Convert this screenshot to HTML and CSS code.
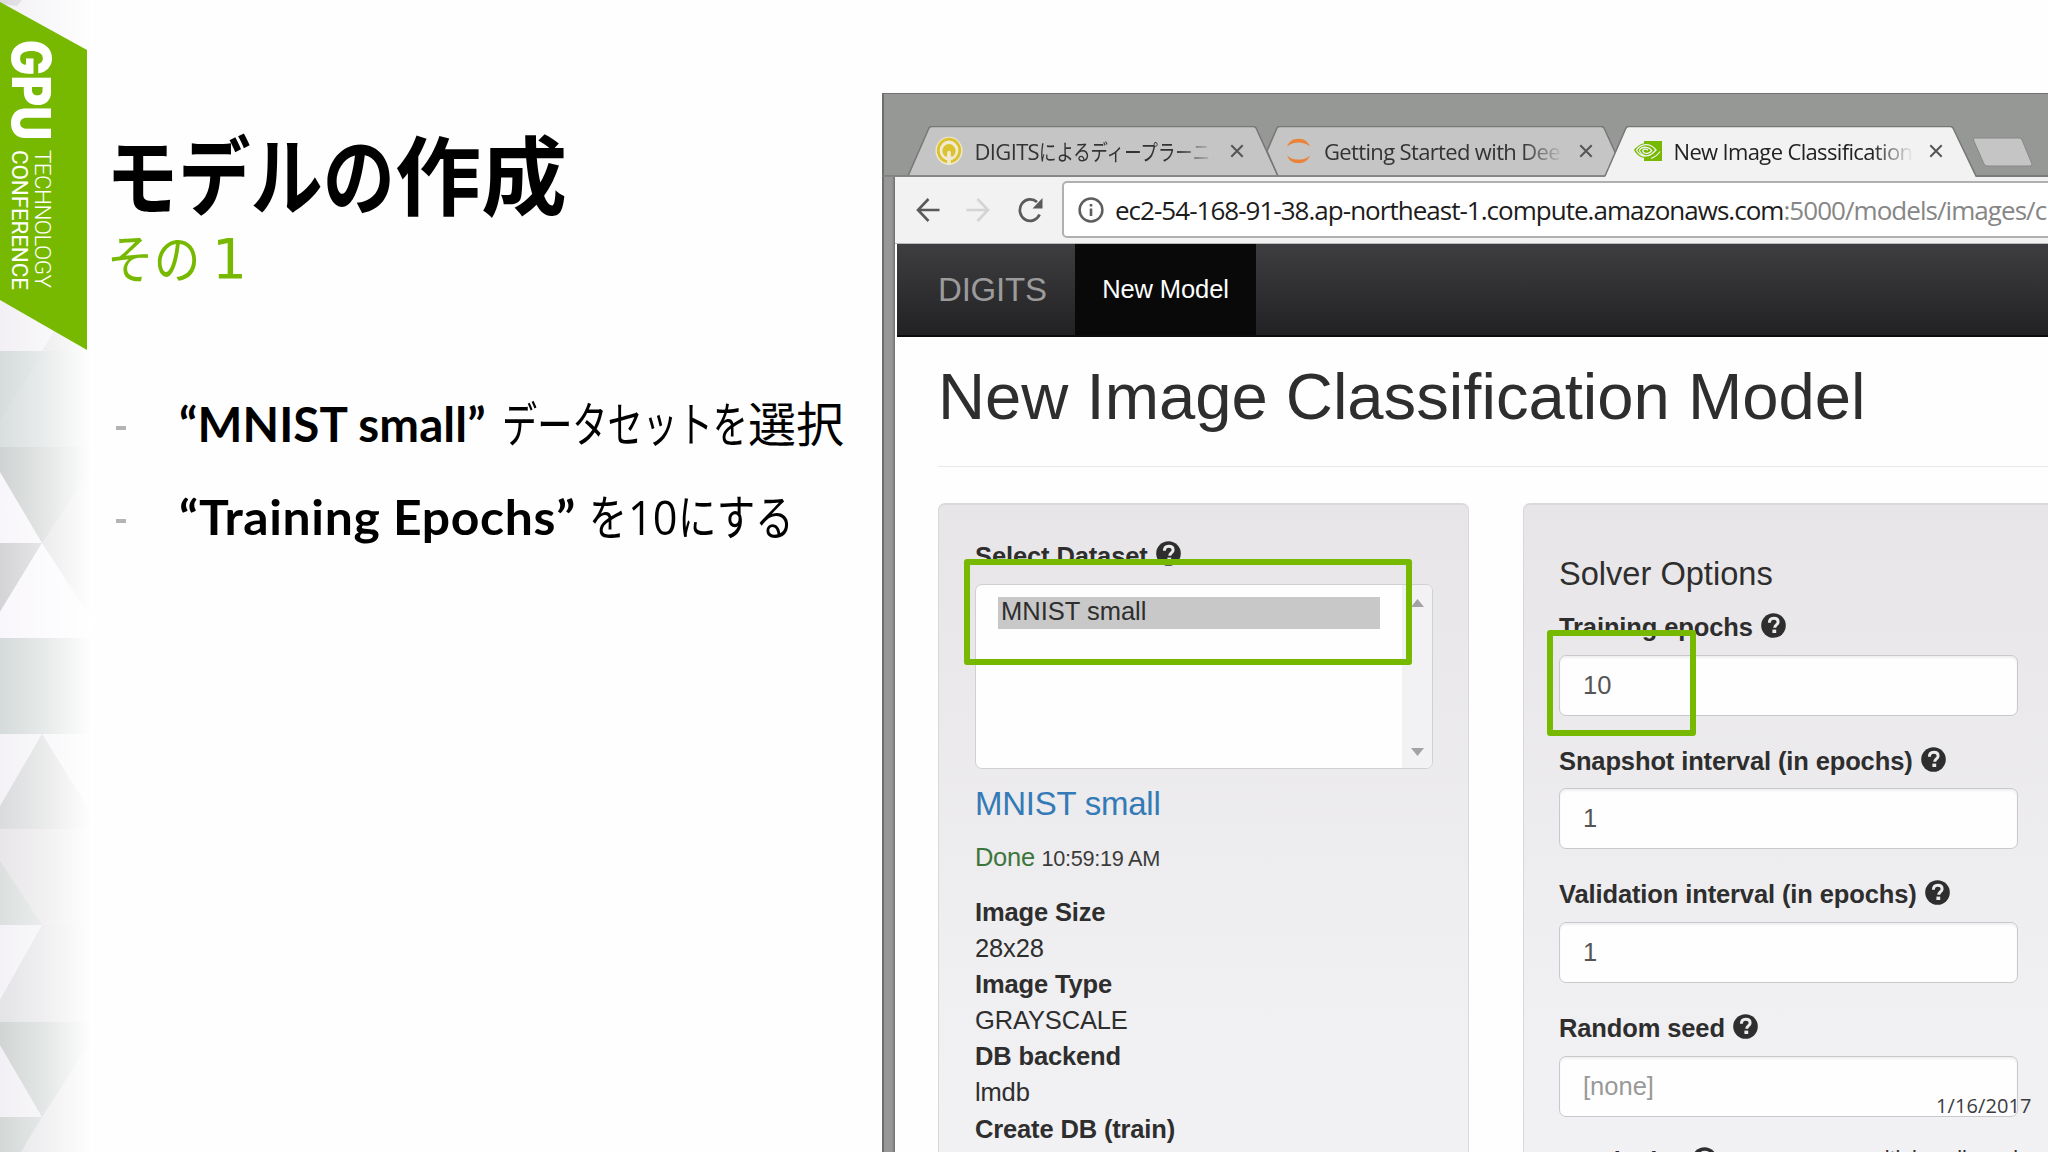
FILE: index.html
```html
<!DOCTYPE html>
<html lang="ja">
<head>
<meta charset="utf-8">
<title>モデルの作成</title>
<link rel="stylesheet" href="styles.css">
</head>
<body>
<svg class="defs" width="0" height="0" aria-hidden="true">
  <symbol id="help" viewBox="0 0 25 25">
    <circle cx="12.5" cy="12.5" r="12.3" fill="#2e2e2e"/>
    <path d="M8.4 9.8c0-3 1.8-4.5 4.3-4.5 2.6 0 4.4 1.4 4.4 3.6 0 3.1-3.4 3-3.4 5.9" fill="none" stroke="#ececec" stroke-width="3"/>
    <rect x="11.4" y="16.6" width="3.8" height="3.4" fill="#ececec"/>
  </symbol>
  <symbol id="close" viewBox="0 0 14 14">
    <path d="M1.3 1.3l11.4 11.4M12.7 1.3L1.3 12.7" stroke="#555" stroke-width="2" fill="none"/>
  </symbol>
</svg>
<main class="slide">
  <aside class="rail">
    <svg width="93" height="1152" viewBox="0 0 93 1152">
      <defs>
        <linearGradient id="fade" x1="0" x2="1" y1="0" y2="0">
          <stop offset="0" stop-color="#fff" stop-opacity="0"/>
          <stop offset=".45" stop-color="#fff" stop-opacity=".4"/>
          <stop offset="1" stop-color="#fff"/>
        </linearGradient>
      </defs>
      <rect width="93" height="1152" fill="#f2f0f4"/>
      <path d="M0 0H22L17 6 0 4z" fill="#dcdadf"/>
      <path d="M57 326L42 351H93V326z" fill="#e2e1e4"/>
      <rect y="351" width="93" height="96" fill="#d9dede"/>
      <path d="M0 351H44L0 420z" fill="#d5dcdb"/>
      <rect y="447" width="93" height="96" fill="#d0d3d3"/>
      <path d="M0 472L42 543H0z" fill="#f8f6fa"/>
      <path d="M42 543L93 465V620z" fill="#dfdee0"/>
      <path d="M0 543H42L0 612z" fill="#d4d4d6"/>
      <path d="M42 543L93 625V638H0V612z" fill="#f9f7fb"/>
      <rect y="638" width="93" height="96" fill="#d5dbda"/>
      <rect y="734" width="93" height="95" fill="#f4f2f6"/>
      <path d="M42 734L0 806V829H93V816z" fill="#dadbdc"/>
      <rect y="829" width="93" height="96" fill="#e8e6e8"/>
      <path d="M0 861L42 925H0z" fill="#dbe0df"/>
      <rect y="925" width="93" height="97" fill="#e4e3e6"/>
      <path d="M0 925H42L0 1000z" fill="#f4f2f6"/>
      <rect y="1022" width="93" height="95" fill="#d0d5d4"/>
      <path d="M0 1045L42 1117H0z" fill="#f2f0f4"/>
      <path d="M42 1117L93 1038V1152H20z" fill="#e6e5e8"/>
      <path d="M0 1117H42L21 1152H0z" fill="#d3d8d7"/>
      <rect width="93" height="1152" fill="url(#fade)"/>
      <path d="M0 2L87 50V350L0 300z" fill="#76b900"/>
      <g fill="#fff">
        <text class="badge-gpu" transform="translate(12 40) rotate(90)" textLength="100" lengthAdjust="spacingAndGlyphs">GPU</text>
        <text class="badge-line thin" transform="translate(34.5 150) rotate(90)" textLength="138">TECHNOLOGY</text>
        <text class="badge-line" transform="translate(11.5 150) rotate(90)" textLength="140">CONFERENCE</text>
      </g>
    </svg>
  </aside>

  <section class="copy">
    <h1 class="title"><span class="title-kana">モデルの</span>作成</h1>
    <p class="subtitle"><span class="subtitle-kana">その</span><span class="subtitle-num">1</span></p>
    <ul class="points">
      <li><b class="w-mnist">“MNIST small”</b><span class="kana-data">データセットを</span>選択</li>
      <li><b class="w-epochs">“Training Epochs”</b><span class="kana-wo">を</span><span class="ten">10</span><span class="kana-suru">にする</span></li>
    </ul>
  </section>

  <section class="browser">
    <header class="tabs">
      <svg class="tab-shapes" width="1165" height="51" viewBox="883 127 1165 51">
        <path d="M883 177H908L929 129Q930 127.500 932 127.500H1253Q1255 127.500 1256 129L1278 177z" fill="#c5c5c5" stroke="#777" stroke-width="1.500"/>
        <path d="M1278 177L1267 152 1277 129Q1278 127.500 1280 127.500H1601Q1603 127.500 1604 129L1626 177z" fill="#c5c5c5" stroke="#777" stroke-width="1.500"/>
        <path d="M883 177.500H2048" stroke="#858585" stroke-width="2"/>
        <path d="M1605 178L1626 129Q1627 127.500 1629 127.500H1950Q1952 127.500 1953 129L1976 178z" fill="#f2f2f2"/>
        <path d="M1605 177L1626 129Q1627 127.500 1629 127.500H1950Q1952 127.500 1953 129L1976 177H2048" fill="none" stroke="#777" stroke-width="1.500"/>
        <path d="M1975 139H2019Q2021 139 2022 141L2032 165Q2032 167 2030 167H1987Q1985 167 1984 165L1973.500 141Q1973 139 1975 139z" fill="#c5c5c5" stroke="#888"/>
      </svg>
      <div class="tab">
        <svg class="fav" width="28" height="30" viewBox="0 0 28 30">
          <ellipse cx="14" cy="14.800" rx="13.500" ry="14" fill="#f0ead2"/>
          <ellipse cx="14" cy="14.500" rx="10.800" ry="11.300" fill="none" stroke="#dcc22e" stroke-width="2.800"/>
          <path d="M10 20.500a6.600 7 0 1 1 8 0z" fill="#dcc22e"/>
          <path d="M12.200 29V16.500a1.800 1.800 0 0 1 3.600 0V29z" fill="#f0ead2"/>
        </svg>
        <span class="tab-text">DIGITS<span class="tab-kana">によるディープラーニン</span></span>
        <svg class="x" width="14" height="14"><use href="#close"/></svg>
      </div>
      <div class="tab">
        <svg class="fav" width="28" height="28" viewBox="0 0 28 28">
          <path d="M3 9.500C5 4.500 9 1.800 14.500 1.800S24 4.500 26 9.500C22.500 6.500 19 5.400 14.500 5.400S6.500 6.500 3 9.500z" fill="#ec8138"/>
          <path d="M3 18.500c2 5 6 7.700 11.500 7.700s9.500-2.700 11.500-7.700c-3.500 3-7 4.100-11.500 4.100s-8-1.100-11.500-4.100z" fill="#ec8138"/>
        </svg>
        <span class="tab-text">Getting Started with Dee</span>
        <svg class="x" width="14" height="14"><use href="#close"/></svg>
      </div>
      <div class="tab active">
        <svg class="fav" width="28" height="20" viewBox="0 0 28 20">
          <path d="M10 0H28V20H10z" fill="#76b900"/>
          <path d="M0 9C4 3.500 9 1.500 14 2c5 .5 8 3.500 11 7.500-4 4.500-8 7.500-13 7.500C6.500 17 2.500 13.500 0 9z" fill="#76b900"/>
          <path d="M10 3.800C6.500 4.500 4 6.500 2.500 9.200c2 3.500 5 6 8.800 6M10 3.800c6-.8 9.500 2 12 5.200-3.500 4-6 5.800-9.500 5.800-4 0-6.700-2.700-7-5.800C7 6.700 9.500 6 12.500 6.300c3 .4 4.500 2 5.300 3.200-1.500 2-3 3-5 3-2.500 0-4-1.500-4-3.200 1.500-1.600 4-1.300 5.200 0" fill="none" stroke="#f2f2f2" stroke-width="1.300"/>
          <path d="M17 17.500c4-1.500 7-4 9-7" fill="none" stroke="#f2f2f2" stroke-width="1.100"/>
        </svg>
        <span class="tab-text">New Image Classification</span>
        <svg class="x" width="14" height="14"><use href="#close"/></svg>
      </div>
    </header>

    <div class="toolbar">
      <svg width="24" height="26" viewBox="0 0 24 26"><path d="M23.500 13H2M12.500 2L2 13l10.500 11" fill="none" stroke="#5a5a5a" stroke-width="2.600"/></svg>
      <svg class="fwd" width="24" height="26" viewBox="0 0 24 26"><path d="M.5 13H22M11.500 2L22 13 11.500 24" fill="none" stroke="#d4d4d4" stroke-width="2.600"/></svg>
      <svg class="reload" width="26" height="26" viewBox="0 0 26 26"><path d="M22.600 17.500A10.300 10.800 0 1 1 20 5" fill="none" stroke="#5a5a5a" stroke-width="2.700"/><path d="M25.500 1V11.500H15.500z" fill="#5a5a5a"/></svg>
      <div class="address">
        <svg width="26" height="26" viewBox="0 0 26 26"><circle cx="13" cy="13" r="11.400" fill="none" stroke="#5e5e5e" stroke-width="2.500"/><path d="M13 11.500v7.500M13 7v2.600" stroke="#5e5e5e" stroke-width="2.600"/></svg>
        <span class="host">ec2-54-168-91-38.ap-northeast-1.compute.amazonaws.com</span><span class="path">:5000/models/images/c</span>
      </div>
    </div>

    <div class="page">
      <nav class="navbar"><span class="brand">DIGITS</span><span class="nav-item">New Model</span></nav>
      <h2 class="page-title">New Image Classification Model</h2>
      <div class="panels">
        <div class="panel dataset">
          <div class="label"><span>Select Dataset</span><svg width="25" height="25"><use href="#help"/></svg></div>
          <div class="listbox">
            <div class="options"><div class="option">MNIST small</div></div>
            <div class="scroll">
              <svg width="13" height="8"><path d="M0 8L6.500 0 13 8z" fill="#a3a2a5"/></svg>
              <svg width="13" height="8"><path d="M0 0L6.500 8 13 0z" fill="#a3a2a5"/></svg>
            </div>
          </div>
          <div class="ds-link">MNIST small</div>
          <div class="status"><span class="done">Done</span> <small>10:59:19 AM</small></div>
          <dl class="facts">
            <dt>Image Size</dt><dd>28x28</dd>
            <dt>Image Type</dt><dd>GRAYSCALE</dd>
            <dt>DB backend</dt><dd>lmdb</dd>
            <dt>Create DB (train)</dt>
          </dl>
        </div>
        <div class="panel solver">
          <h3 class="solver-title">Solver Options</h3>
          <div class="field"><div class="label"><span>Training epochs</span><svg width="25" height="25"><use href="#help"/></svg></div><div class="input">10</div></div>
          <div class="field"><div class="label"><span>Snapshot interval (in epochs)</span><svg width="25" height="25"><use href="#help"/></svg></div><div class="input">1</div></div>
          <div class="field"><div class="label"><span>Validation interval (in epochs)</span><svg width="25" height="25"><use href="#help"/></svg></div><div class="input">1</div></div>
          <div class="field"><div class="label"><span>Random seed</span><svg width="25" height="25"><use href="#help"/></svg></div><div class="input empty">[none]</div></div>
          <div class="field last"><div class="label"><span>Batch size</span><svg width="25" height="25"><use href="#help"/></svg><small class="hint">multiples allowed</small></div></div>
        </div>
      </div>
    </div>
  </section>

  <div class="mark mark-dataset"></div>
  <div class="mark mark-epochs"></div>
  <div class="date">1/16/2017</div>
</main>
</body>
</html>
```
FILE: styles.css
```css
* { box-sizing: border-box; }
body { margin: 0; background: #fff; }
h1, h2, h3, p, ul, dl, dd { margin: 0; padding: 0; font-weight: 400; }
svg { display: block; flex: none; }
.defs { position: absolute; }

.slide {
  position: relative;
  display: flex;
  width: 2048px;
  height: 1152px;
  overflow: hidden;
  background: #fefefe;
}

/* left rail with the conference badge */
.rail { flex: none; width: 93px; }
.badge-gpu { font: 900 53px Inter, sans-serif; }
.badge-line { font: 400 22.5px Roboto, sans-serif; }
.badge-line.thin { font-weight: 300; }

/* slide text */
.copy {
  flex: none;
  width: 789px;
  padding: 122px 0 0 13px;
  font-family: "Noto Sans CJK JP", sans-serif;
  color: #000;
  white-space: nowrap;
}
.title { font-size: 86px; font-weight: 700; line-height: 100px; }
.title-kana { display: inline-block; transform: scaleX(.84); transform-origin: 0 0; margin-right: -55px; }
.subtitle { margin-top: 4px; padding-left: 1px; font-size: 53px; line-height: 60px; color: #76b900; display: flex; }
.subtitle-kana { width: 105px; transform: scaleX(.88); transform-origin: 0 0; }
.subtitle-num { padding-top: 3px; font-family: "DejaVu Sans", sans-serif; font-size: 55px; }
.points { margin-top: 102px; padding-left: 73px; list-style: none; font-size: 48px; }
.points li { display: flex; position: relative; height: 60px; line-height: 60px; margin-bottom: 33px; align-items: baseline; }
.points li::before { content: ""; position: absolute; left: -63px; top: 35px; width: 10px; height: 4px; background: #b5b3b5; }
.points b { font: 700 47.5px/60px Lato, sans-serif; }
.w-mnist { width: 323px; letter-spacing: .1px; }
.w-epochs { width: 410px; letter-spacing: .6px; transform: scaleX(1.05); transform-origin: 0 0; }
.points span { transform-origin: 0 0; }
.kana-data { width: 246px; transform: scaleX(.732); }
.kana-wo { width: 39px; transform: scaleX(.79); }
.ten { width: 50px; font: 400 48px/60px "Open Sans", sans-serif; transform: scaleX(.9); }
.kana-suru { width: 115px; transform: scaleX(.8); }

/* browser window */
.browser {
  flex: none;
  width: 1166px;
  margin-top: 94px;
  margin-left: -13px;
  padding-left: 11px;
  border-left: 2px solid #6e6e6e;
  background: linear-gradient(90deg, #979797 0 8px, #6f6f70 11px) #959894;
  box-shadow: 0 -1px #707270;
}
.copy + .browser { margin-left: 0; }
.tabs {
  position: relative;
  display: flex;
  height: 83px;
  margin-left: -11px;
  padding: 32px 0 0 22.500px;
  background: #959894;
}
.tab-shapes { position: absolute; left: -1px; top: 32px; }
.tab { position: relative; display: flex; align-items: center; flex: none; width: 349.5px; height: 50px; padding-left: 28px; }
.fav { flex: none; }
.tab-text {
  width: 242px;
  margin-left: 12px;
  overflow: hidden;
  white-space: nowrap;
  font: 22px/34px "Open Sans", "Noto Sans CJK JP", sans-serif;
  letter-spacing: -.65px;
  color: #333;
  -webkit-mask-image: linear-gradient(90deg, #000 82%, transparent 99%);
  mask-image: linear-gradient(90deg, #000 82%, transparent 99%);
}
.active .tab-text { color: #222; }
.tab-kana { display: inline-block; transform: scaleX(.79); transform-origin: 0 0; letter-spacing: 0; }
.x { margin-left: 13px; }
.toolbar {
  display: flex;
  align-items: center;
  height: 67px;
  padding: 0 0 1px 21px;
  background: #f2f2f2;
  border-bottom: 1px solid #b8b8b8;
}
.fwd { margin-left: 26px; }
.reload { margin-left: 27px; }
.address {
  display: flex;
  align-items: center;
  flex: none;
  width: 1000px;
  height: 57px;
  margin-left: 19px;
  padding-left: 14px;
  border: 2px solid #b0b0b0;
  border-radius: 5px;
  background: #fff;
  font: 26px/40px "Open Sans", sans-serif;
  white-space: nowrap;
}
.host { margin-left: 11px; letter-spacing: -.98px; color: #1c1c1c; }
.path { letter-spacing: -.95px; color: #868686; }

/* page inside the browser */
.page { height: 908px; overflow: hidden; border-left: 2px solid #fff; background: #fefefe; font-family: "Liberation Sans", Arial, sans-serif; font-size: 25.5px; color: #2e2e2e; }
.navbar {
  display: flex;
  align-items: center;
  height: 93px;
  background: linear-gradient(#3e3d3f, #222123);
  border-bottom: 2px solid #0c0c0c;
}
.brand { width: 178px; padding-left: 41px; font-size: 33px; letter-spacing: -.2px; color: #9b9b9b; }
.nav-item { display: flex; align-items: center; justify-content: center; width: 181px; height: 100%; background: #0a090a; color: #fff; letter-spacing: -.1px; }
.page-title {
  margin-left: 41px;
  padding-top: 20px;
  height: 130px;
  border-bottom: 1.500px solid #e9e7ea;
  font-size: 65.2px;
  line-height: 80px;
}
.panels { display: flex; gap: 54px; margin: 36px 0 0 41px; }
.panel {
  flex: none;
  height: 900px;
  border: 1px solid #d8d7d9;
  border-top: 2px solid #dad9db;
  border-radius: 7px;
  background: linear-gradient(#e7e5e7, #f0eff1 500px, #f4f3f5);
}
.dataset { width: 531px; padding: 33px 36px 0; }
.label { display: flex; height: 36px; line-height: 36px; font-weight: 700; letter-spacing: -.12px; white-space: nowrap; }
.label svg { margin: 4px 0 0 8px; }
.dataset .label svg { margin-top: 3px; }
.listbox { display: flex; width: 458px; height: 185px; margin-top: 10px; border: 1.500px solid #d0cfd1; border-radius: 7px; background: #fefefe; overflow: hidden; }
.options { flex: 1; padding: 12px 22px; }
.option { height: 32px; padding-left: 3px; line-height: 28px; background: #c8c8c8; }
.scroll { display: flex; flex-direction: column; justify-content: space-between; align-items: center; width: 30px; padding: 14px 0 12px; background: #f2f1f3; }
.ds-link { margin-top: 15px; font-size: 33px; line-height: 40px; letter-spacing: -.25px; color: #337ab7; }
.status { margin-top: 15px; line-height: 36px; letter-spacing: -.3px; color: #3b3b3b; }
.status small { font-size: 21.7px; }
.done { color: #3c763d; }
.facts { margin-top: 17px; line-height: 36.100px; letter-spacing: -.15px; }
.facts dt { font-weight: 700; }
.solver { width: 600px; padding: 49px 0 0 35px; }
.solver-title { font-size: 32.6px; line-height: 40px; }
.field { margin-top: 15px; width: 459px; }
.field + .field { margin-top: 27px; }
.field + .field.last { margin-top: 26px; }
.input { height: 61px; margin-top: 9.670px; padding-left: 23px; border: 1.500px solid #c9c8ca; border-radius: 7px; background: #fefefe; box-shadow: inset 0 2px 2px #f0eff1; line-height: 59px; color: #555; }
.input.empty { color: #999; }
.hint { margin-left: auto; font-size: 21.7px; font-weight: 400; line-height: 31px; }

/* overlays */
.mark { position: absolute; border: 6.500px solid #76b900; border-radius: 3px; }
.mark-dataset { left: 964px; top: 558.500px; width: 448px; height: 106.500px; }
.mark-epochs { left: 1547px; top: 629.500px; width: 149px; height: 106.500px; }
.date { position: absolute; left: 1936px; top: 1092px; font: 20px/28px "Open Sans", sans-serif; letter-spacing: .1px; color: #3c3c40; }
```
